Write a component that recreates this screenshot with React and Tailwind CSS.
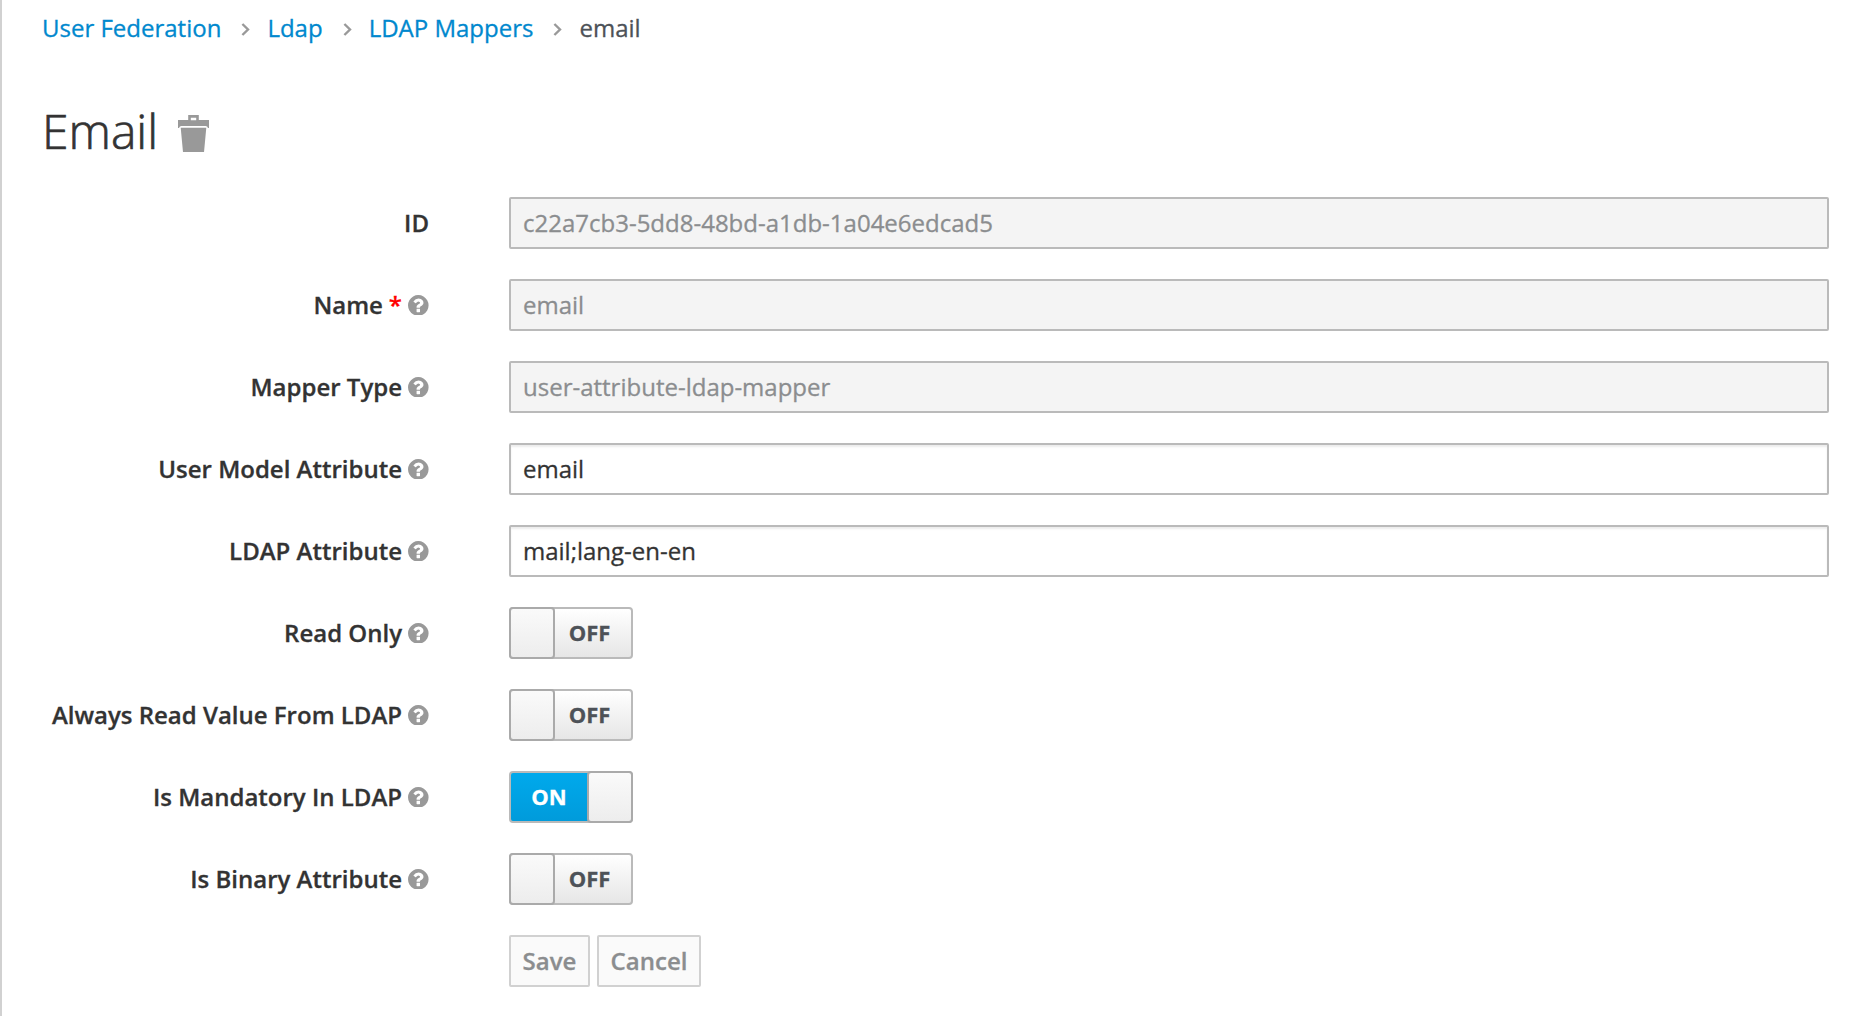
import React from "react";

function Chevron() {
  return (
    <svg className="mt-[3px] mr-[17px] ml-5 h-[13px] w-[9px] shrink-0" viewBox="0 0 9 13" fill="none" stroke="#999999" strokeWidth="2.4">
      <path d="M1.4 1L7 6.5L1.4 12" />
    </svg>
  );
}

function HelpIcon() {
  return (
    <svg className="ml-[6.4px] size-[20.6px] shrink-0 fill-[#999999]" viewBox="128 128 1536 1536">
      <path d="M1024 1376v-192q0-14-9-23t-23-9h-192q-14 0-23 9t-9 23v192q0 14 9 23t23 9h192q14 0 23-9t9-23zm256-672q0-88-55.5-163t-138.5-116-170-41q-243 0-371 213-15 24 8 42l132 100q7 6 19 6 16 0 25-12 53-68 86-92 34-24 86-24 48 0 85.5 26t37.5 59q0 38-20 61t-68 45q-63 28-115.5 86.5t-52.5 125.5v36q0 14 9 23t23 9h192q14 0 23-9t9-23q0-19 21.5-49.5t54.5-49.5q32-18 49-28.5t46-35 44.5-48 28-60.5 12.5-81zm384 192q0 209-103 385.5t-279.5 279.5-385.5 103-385.5-103-279.5-279.5-103-385.5 103-385.5 279.5-279.5 385.5-103 385.5 103 279.5 279.5 103 385.5z" />
    </svg>
  );
}

function TrashIcon() {
  return (
    <svg className="h-[37px] w-[31px]" viewBox="0 0 31 37" fill="#999999">
      <path fillRule="evenodd" d="M10.2 0h10.6v5H31v8h-1q-.6-2-2.4-2H3.4q-1.8 0-2.4 2H0V5h10.2zM12.8 2.8V5.2h5.4V2.8z" />
      <path d="M2.7 12.8h25.6L26 37H5z" />
    </svg>
  );
}

function Row({ label, required, help = true, children }) {
  return (
    <div className="flex h-[52px] items-center">
      <div className="mr-20 flex w-[387px] items-center justify-end font-semibold whitespace-nowrap">
        {label}
        {required && <span className="ml-[6px] text-[#ff0000]">*</span>}
        {label && help && <HelpIcon />}
      </div>
      {children}
    </div>
  );
}

function Field({ value, disabled }) {
  return (
    <input
      readOnly
      disabled={disabled}
      defaultValue={value}
      className="h-[52px] w-[1320px] rounded-[2px] border-2 border-[#bababa] bg-white px-3 pb-0.5 text-[#333333] shadow-[inset_0_2px_2px_rgba(3,3,3,0.075)] outline-none disabled:bg-[#f4f4f4] disabled:text-[#8b8d8f] disabled:shadow-none"
    />
  );
}

function Toggle({ on }) {
  const handle = (
    <span className="-my-0.5 h-[52px] w-[46px] shrink-0 rounded-[4px] border-2 border-[#aaaaaa] bg-linear-to-b from-[#fafafa] to-[#ededed]" />
  );
  return on ? (
    <button className="flex h-[52px] w-[124px] rounded-[4px] border-2 border-[#bababa] bg-linear-to-b from-[#00a9ec] to-[#009bdb] font-bold text-white">
      <span className="flex h-12 w-[76px] shrink-0 items-center justify-center pb-[3px] text-[22px]">ON</span>
      {handle}
    </button>
  ) : (
    <button className="flex h-[52px] w-[124px] rounded-[4px] border-2 border-[#bababa] bg-linear-to-b from-white to-[#e6e6e6] font-bold text-[#4d5258]">
      <span className="-ml-0.5 flex">{handle}</span>
      <span className="flex h-12 w-[69px] items-center justify-center pb-[3px] text-[22px]">OFF</span>
    </button>
  );
}

export default function App() {
  return (
    <main className="h-[1016px] overflow-hidden border-l-2 border-[#d1d1d1] bg-white pl-10 font-['Open_Sans',sans-serif] text-[24px] leading-10 text-[#333333] [-webkit-text-stroke:0.3px]">
      <nav className="flex h-14 items-center text-[#0088ce]">
        <a>User Federation</a>
        <Chevron />
        <a>Ldap</a>
        <Chevron />
        <a>LDAP Mappers</a>
        <Chevron />
        <span className="text-[#4d5258]">email</span>
      </nav>
      <h1 className="mt-11 flex h-[66px] items-center gap-5 text-[48px] font-light [-webkit-text-stroke:0.7px]">
        <span className="pb-1">Email</span>
        <TrashIcon />
      </h1>
      <form className="mt-[31px] flex flex-col gap-[30px]">
        <Row label="ID" help={false}><Field value="c22a7cb3-5dd8-48bd-a1db-1a04e6edcad5" disabled /></Row>
        <Row label="Name" required><Field value="email" disabled /></Row>
        <Row label="Mapper Type"><Field value="user-attribute-ldap-mapper" disabled /></Row>
        <Row label="User Model Attribute"><Field value="email" /></Row>
        <Row label="LDAP Attribute"><Field value="mail;lang-en-en" /></Row>
        <Row label="Read Only"><Toggle /></Row>
        <Row label="Always Read Value From LDAP"><Toggle /></Row>
        <Row label="Is Mandatory In LDAP"><Toggle on /></Row>
        <Row label="Is Binary Attribute"><Toggle /></Row>
        <Row>
          <div className="flex gap-[7px] font-semibold text-[#8b8d8f]">
            <button type="button" disabled className="h-[52px] w-[81px] rounded-[2px] border-2 border-[#d1d1d1] bg-[#fafafa]">Save</button>
            <button type="button" disabled className="h-[52px] w-[104px] rounded-[2px] border-2 border-[#d1d1d1] bg-[#fafafa]">Cancel</button>
          </div>
        </Row>
      </form>
    </main>
  );
}
